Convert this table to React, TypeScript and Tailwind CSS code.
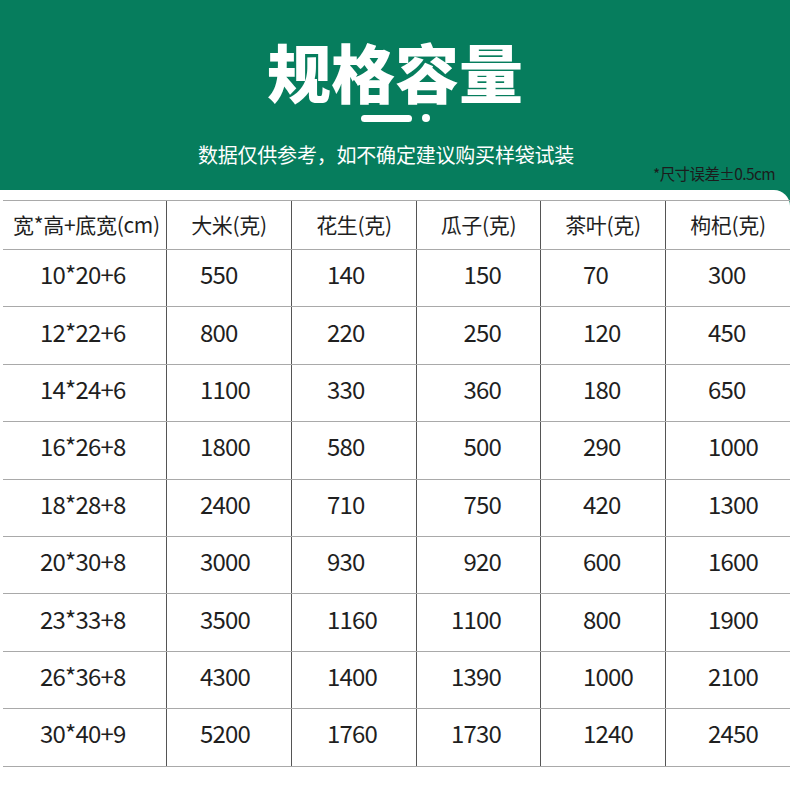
const HEADERS = ["宽*高+底宽(cm)", "大米(克)", "花生(克)", "瓜子(克)", "茶叶(克)", "枸杞(克)"];

const ROWS = [
  ["10*20+6", "550", "140", "150", "70", "300"],
  ["12*22+6", "800", "220", "250", "120", "450"],
  ["14*24+6", "1100", "330", "360", "180", "650"],
  ["16*26+8", "1800", "580", "500", "290", "1000"],
  ["18*28+8", "2400", "710", "750", "420", "1300"],
  ["20*30+8", "3000", "930", "920", "600", "1600"],
  ["23*33+8", "3500", "1160", "1100", "800", "1900"],
  ["26*36+8", "4300", "1400", "1390", "1000", "2100"],
  ["30*40+9", "5200", "1760", "1730", "1240", "2450"],
];

// where each data column places its numbers (taken from the picture)
const CELL_POS = [
  "justify-start pl-[37px]",
  "justify-start pl-[33px]",
  "justify-start pl-[35px]",
  "justify-end pr-[39px]",
  "justify-start pl-[42px]",
  "justify-start pl-[42px]",
];

const GRID = "grid grid-cols-[164px_125px_125px_124px_125px_1fr]";

export default function App() {
  return (
    <div className="w-[790px] h-[790px] overflow-hidden bg-[#067d5d] font-['Noto_Sans_CJK_SC','Noto_Sans',sans-serif]">
      <div className="h-[190px] pt-[34px] flex flex-col items-center text-white">
        <h1 className="text-[64px] leading-[72px] font-black">规格容量</h1>
        <div className="mt-[8px] h-[8px] flex items-center gap-[10px]">
          <div className="w-[51px] h-[7px] rounded-full bg-white" />
          <div className="w-[8px] h-[8px] rounded-full bg-white" />
        </div>
        <p className="mt-[20px] mr-[18px] text-[20px] leading-[26px] tracking-[-0.2px]">数据仅供参考，如不确定建议购买样袋试装</p>
        <p className="self-end pr-[15px] -mt-[4px] text-[15.5px] leading-[18px] tracking-[-0.6px] text-[#1c1c1c]">*尺寸误差±0.5cm</p>
      </div>

      <div className="h-[600px] bg-white rounded-tr-[16px] pt-[10px] pl-[3px]">
        <div className="border-t border-[#a9a9a9] text-[#1f1f1f]">
          <div className={`${GRID} h-[49px] border-b border-[#a9a9a9]`}>
            {HEADERS.map((h, i) => (
              <div
                key={h}
                className={`flex items-center ${i === 0 ? "justify-start pl-[10px]" : "justify-center"} ${i < 5 ? "border-r border-[#555]" : ""} text-[21px] tracking-[-0.3px]`}
              >
                {h}
              </div>
            ))}
          </div>
          {ROWS.map((row) => (
            <div key={row[0]} className={`${GRID} h-[57.4px] border-b border-[#a9a9a9]`}>
              {row.map((v, i) => (
                <div
                  key={i}
                  className={`flex items-center ${CELL_POS[i]} ${i < 5 ? "border-r border-[#555]" : ""} text-[24px] tracking-[-0.8px] pb-[8px]`}
                >
                  {v}
                </div>
              ))}
            </div>
          ))}
        </div>
      </div>
    </div>
  );
}
